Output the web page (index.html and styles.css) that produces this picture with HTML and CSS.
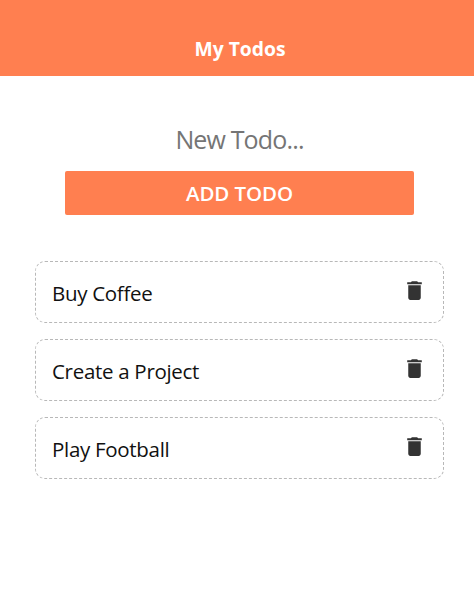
FILE: index.html
```html
<!DOCTYPE html>
<html lang="en">
<head>
<meta charset="utf-8">
<title>My Todos</title>
<link rel="stylesheet" href="styles.css">
</head>
<body>
<svg class="sprite" width="0" height="0"><symbol id="trash" viewBox="0 0 24 24"><path d="M6 19c0 1.1.9 2 2 2h8c1.1 0 2-.9 2-2V7H6v12zM19 4h-3.500l-1-1h-5l-1 1H5v2h14V4z"/></symbol></svg>
<header class="header"><h1 class="title">My Todos</h1></header>
<form class="form">
  <input class="field" type="text" placeholder="New Todo...">
  <button class="add" type="button">ADD TODO</button>
</form>
<ul class="list">
  <li class="todo"><span class="name">Buy Coffee</span><svg class="icon"><use href="#trash"/></svg></li>
  <li class="todo"><span class="name">Create a Project</span><svg class="icon"><use href="#trash"/></svg></li>
  <li class="todo"><span class="name">Play Football</span><svg class="icon"><use href="#trash"/></svg></li>
</ul>
</body>
</html>
```
FILE: styles.css
```css
* { box-sizing: border-box; }
body {
  margin: 0;
  background: #fff;
  font-family: "Segoe UI", "Open Sans", sans-serif;
  overflow: hidden;
}
.sprite { display: none; }
.header {
  height: 76px;
  padding-top: 35px;
  background: coral;
  text-align: center;
}
.title {
  margin: 0;
  padding-left: 6px;
  color: #fff;
  font-size: 19.3px;
  line-height: 28px;
  font-weight: 700;
}
.form {
  display: flex;
  flex-direction: column;
  margin: 43px 60px 0 65px;
}
.field {
  height: 40px;
  padding: 0;
  border: 0;
  outline: 0;
  background: transparent;
  font: 400 25px/40px "Segoe UI", "Open Sans", sans-serif;
  letter-spacing: -0.85px;
  text-align: center;
}
.field::placeholder { color: #757575; }
.add {
  height: 44px;
  margin-top: 12px;
  padding: 0;
  border: 0;
  border-radius: 2px;
  background: coral;
  color: #fff;
  font: 600 20.5px/40px "Segoe UI", "Open Sans", sans-serif;
  letter-spacing: -0.1px;
}
.list {
  display: flex;
  flex-direction: column;
  gap: 16px;
  margin: 46px 30px 0 35px;
  padding: 0;
  list-style: none;
}
.todo {
  display: flex;
  justify-content: space-between;
  height: 62px;
  padding: 16px 16px 0;
  border: 1px dashed #b8b8b8;
  border-radius: 10px;
}
.name {
  color: #111;
  font-size: 20.5px;
  line-height: 30px;
  letter-spacing: -0.3px;
}
.icon {
  width: 25px;
  height: 25px;
  fill: #333;
}
```
